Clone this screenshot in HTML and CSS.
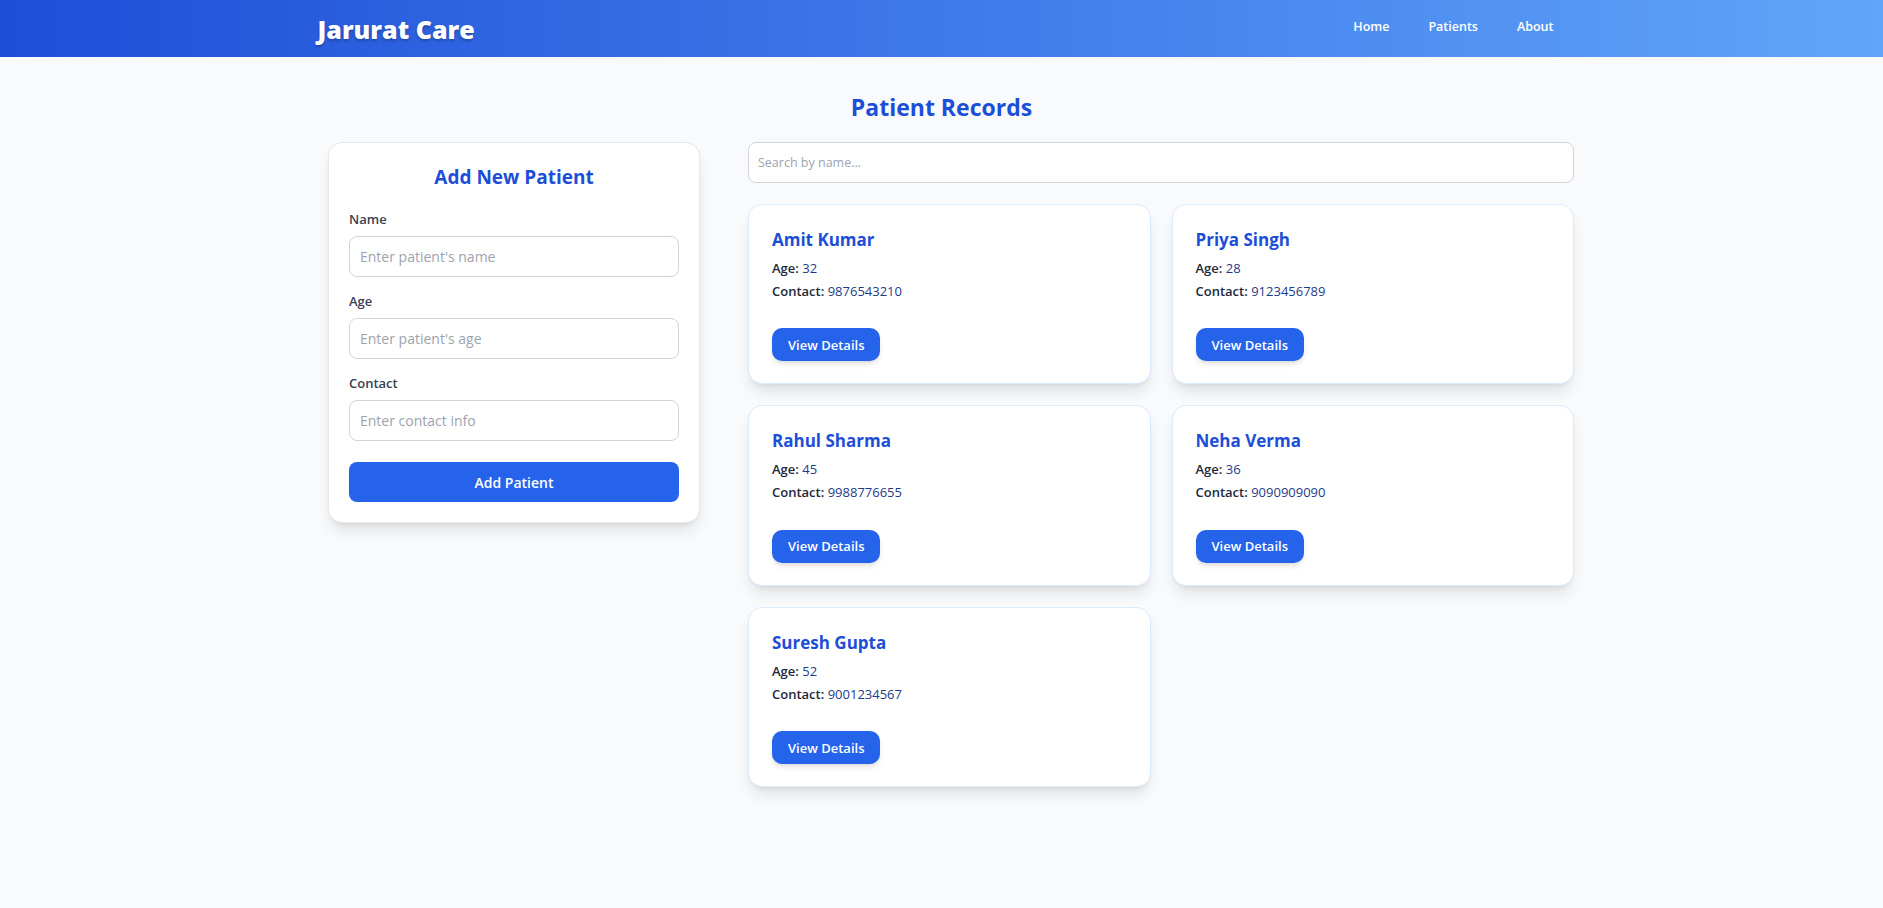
FILE: index.html
```html
<!DOCTYPE html>
<html lang="en">
<head>
<meta charset="utf-8">
<title>Jarurat Care</title>
<link rel="stylesheet" href="styles.css">
</head>
<body>
<header class="topbar">
  <div class="topbar-inner">
    <h1 class="brand">Jarurat Care</h1>
    <nav class="nav">
      <a href="#" class="nav-link">Home</a>
      <a href="#" class="nav-link">Patients</a>
      <a href="#" class="nav-link">About</a>
    </nav>
  </div>
</header>
<main class="page">
  <h2 class="page-title">Patient Records</h2>
  <div class="layout">
    <section class="form-card">
      <h3 class="form-title">Add New Patient</h3>
      <div class="field">
        <label class="field-label">Name</label>
        <input class="field-input" type="text" placeholder="Enter patient's name">
      </div>
      <div class="field">
        <label class="field-label">Age</label>
        <input class="field-input" type="text" placeholder="Enter patient's age">
      </div>
      <div class="field">
        <label class="field-label">Contact</label>
        <input class="field-input" type="text" placeholder="Enter contact info">
      </div>
      <button class="submit-btn" type="button">Add Patient</button>
    </section>
    <section class="records">
      <input class="search" type="text" placeholder="Search by name...">
      <div class="grid">
        <article class="card">
          <h4 class="card-name">Amit Kumar</h4>
          <p class="card-line"><strong>Age:</strong> 32</p>
          <p class="card-line"><strong>Contact:</strong> 9876543210</p>
          <button class="details-btn" type="button">View Details</button>
        </article>
        <article class="card">
          <h4 class="card-name">Priya Singh</h4>
          <p class="card-line"><strong>Age:</strong> 28</p>
          <p class="card-line"><strong>Contact:</strong> 9123456789</p>
          <button class="details-btn" type="button">View Details</button>
        </article>
        <article class="card">
          <h4 class="card-name">Rahul Sharma</h4>
          <p class="card-line"><strong>Age:</strong> 45</p>
          <p class="card-line"><strong>Contact:</strong> 9988776655</p>
          <button class="details-btn" type="button">View Details</button>
        </article>
        <article class="card">
          <h4 class="card-name">Neha Verma</h4>
          <p class="card-line"><strong>Age:</strong> 36</p>
          <p class="card-line"><strong>Contact:</strong> 9090909090</p>
          <button class="details-btn" type="button">View Details</button>
        </article>
        <article class="card">
          <h4 class="card-name">Suresh Gupta</h4>
          <p class="card-line"><strong>Age:</strong> 52</p>
          <p class="card-line"><strong>Contact:</strong> 9001234567</p>
          <button class="details-btn" type="button">View Details</button>
        </article>
      </div>
    </section>
  </div>
</main>
</body>
</html>
```

FILE: styles.css
```css
* { box-sizing: border-box; }

html, body {
  margin: 0;
  padding: 0;
}

body {
  background: #f8fafc;
  font-family: "Open Sans", "Noto Sans", sans-serif;
  color: #1f2937;
  min-height: 908px;
}

.topbar {
  height: 57px;
  background: linear-gradient(to right, #1d4ed8, #60a5fa);
}

.topbar-inner {
  max-width: 1280px;
  height: 100%;
  margin: 0 auto;
  padding: 0 16px;
  display: flex;
  align-items: center;
  justify-content: space-between;
}

.brand {
  margin: 0;
  font-size: 25px;
  line-height: 32px;
  font-weight: 800;
  color: #ffffff;
  text-shadow: 0 2px 3px rgba(0, 0, 0, 0.25);
}

.nav {
  display: flex;
  gap: 15px;
  margin-top: -3px;
}

.nav-link {
  padding: 0 12px;
  font-size: 12.5px;
  line-height: 20px;
  font-weight: 600;
  color: #ffffff;
  text-decoration: none;
}

.page {
  padding-top: 34px;
  padding-bottom: 40px;
}

.page-title {
  margin: 0 0 19px;
  text-align: center;
  font-size: 23px;
  line-height: 32px;
  font-weight: 700;
  color: #1d4ed8;
}

.layout {
  max-width: 1265px;
  margin: 0 auto;
  padding-left: 19px;
  display: flex;
  align-items: flex-start;
  gap: 48px;
}

.form-card {
  width: 372px;
  flex: none;
  background: #ffffff;
  border: 1px solid #e5e7eb;
  border-radius: 14px;
  padding: 20px;
  box-shadow: 0 10px 15px -3px rgba(0, 0, 0, 0.1), 0 4px 6px -4px rgba(0, 0, 0, 0.1);
}

.form-title {
  margin: 0 0 18px;
  text-align: center;
  font-size: 19px;
  line-height: 28px;
  font-weight: 700;
  color: #1d4ed8;
}

.field {
  margin-bottom: 14px;
}

.field-label {
  display: block;
  margin-bottom: 7px;
  font-size: 13px;
  line-height: 20px;
  font-weight: 600;
  color: #374151;
}

.field-input,
.search {
  display: block;
  width: 100%;
  height: 41px;
  padding: 0 10px;
  border: 1px solid #d1d5db;
  border-radius: 8px;
  background: #ffffff;
  font-family: inherit;
  font-size: 14px;
  color: #111827;
  outline: none;
}

.field-input::placeholder,
.search::placeholder {
  color: #9ca3af;
}

.submit-btn {
  display: block;
  width: 100%;
  height: 40px;
  margin-top: 21px;
  border: none;
  border-radius: 8px;
  background: #2563eb;
  color: #ffffff;
  font-family: inherit;
  font-size: 14px;
  font-weight: 600;
}

.records {
  flex: 1;
  min-width: 0;
}

.search {
  margin-bottom: 21px;
  padding: 0 9px;
  font-size: 12.5px;
}

.grid {
  display: grid;
  grid-template-columns: 1fr 1fr;
  gap: 21px;
}

.card {
  background: #ffffff;
  border: 1px solid #dbeafe;
  border-radius: 14px;
  padding: 25px 23px 22px;
  box-shadow: 0 10px 15px -3px rgba(0, 0, 0, 0.1), 0 4px 6px -4px rgba(0, 0, 0, 0.1);
}

.card-name {
  margin: 0 0 7px;
  font-size: 17px;
  line-height: 20px;
  font-weight: 700;
  color: #1d4ed8;
}

.card-line {
  margin: 0;
  font-size: 13px;
  line-height: 22.7px;
  color: #1e3a8a;
}

.card-line strong {
  font-weight: 600;
  color: #1e293b;
}

.details-btn {
  display: block;
  height: 33px;
  margin-top: 26px;
  padding: 0 16px;
  border: none;
  border-radius: 10px;
  background: #2563eb;
  color: #ffffff;
  font-family: inherit;
  font-size: 13px;
  font-weight: 600;
  box-shadow: 0 4px 6px -1px rgba(0, 0, 0, 0.1), 0 2px 4px -2px rgba(0, 0, 0, 0.1);
}
```
